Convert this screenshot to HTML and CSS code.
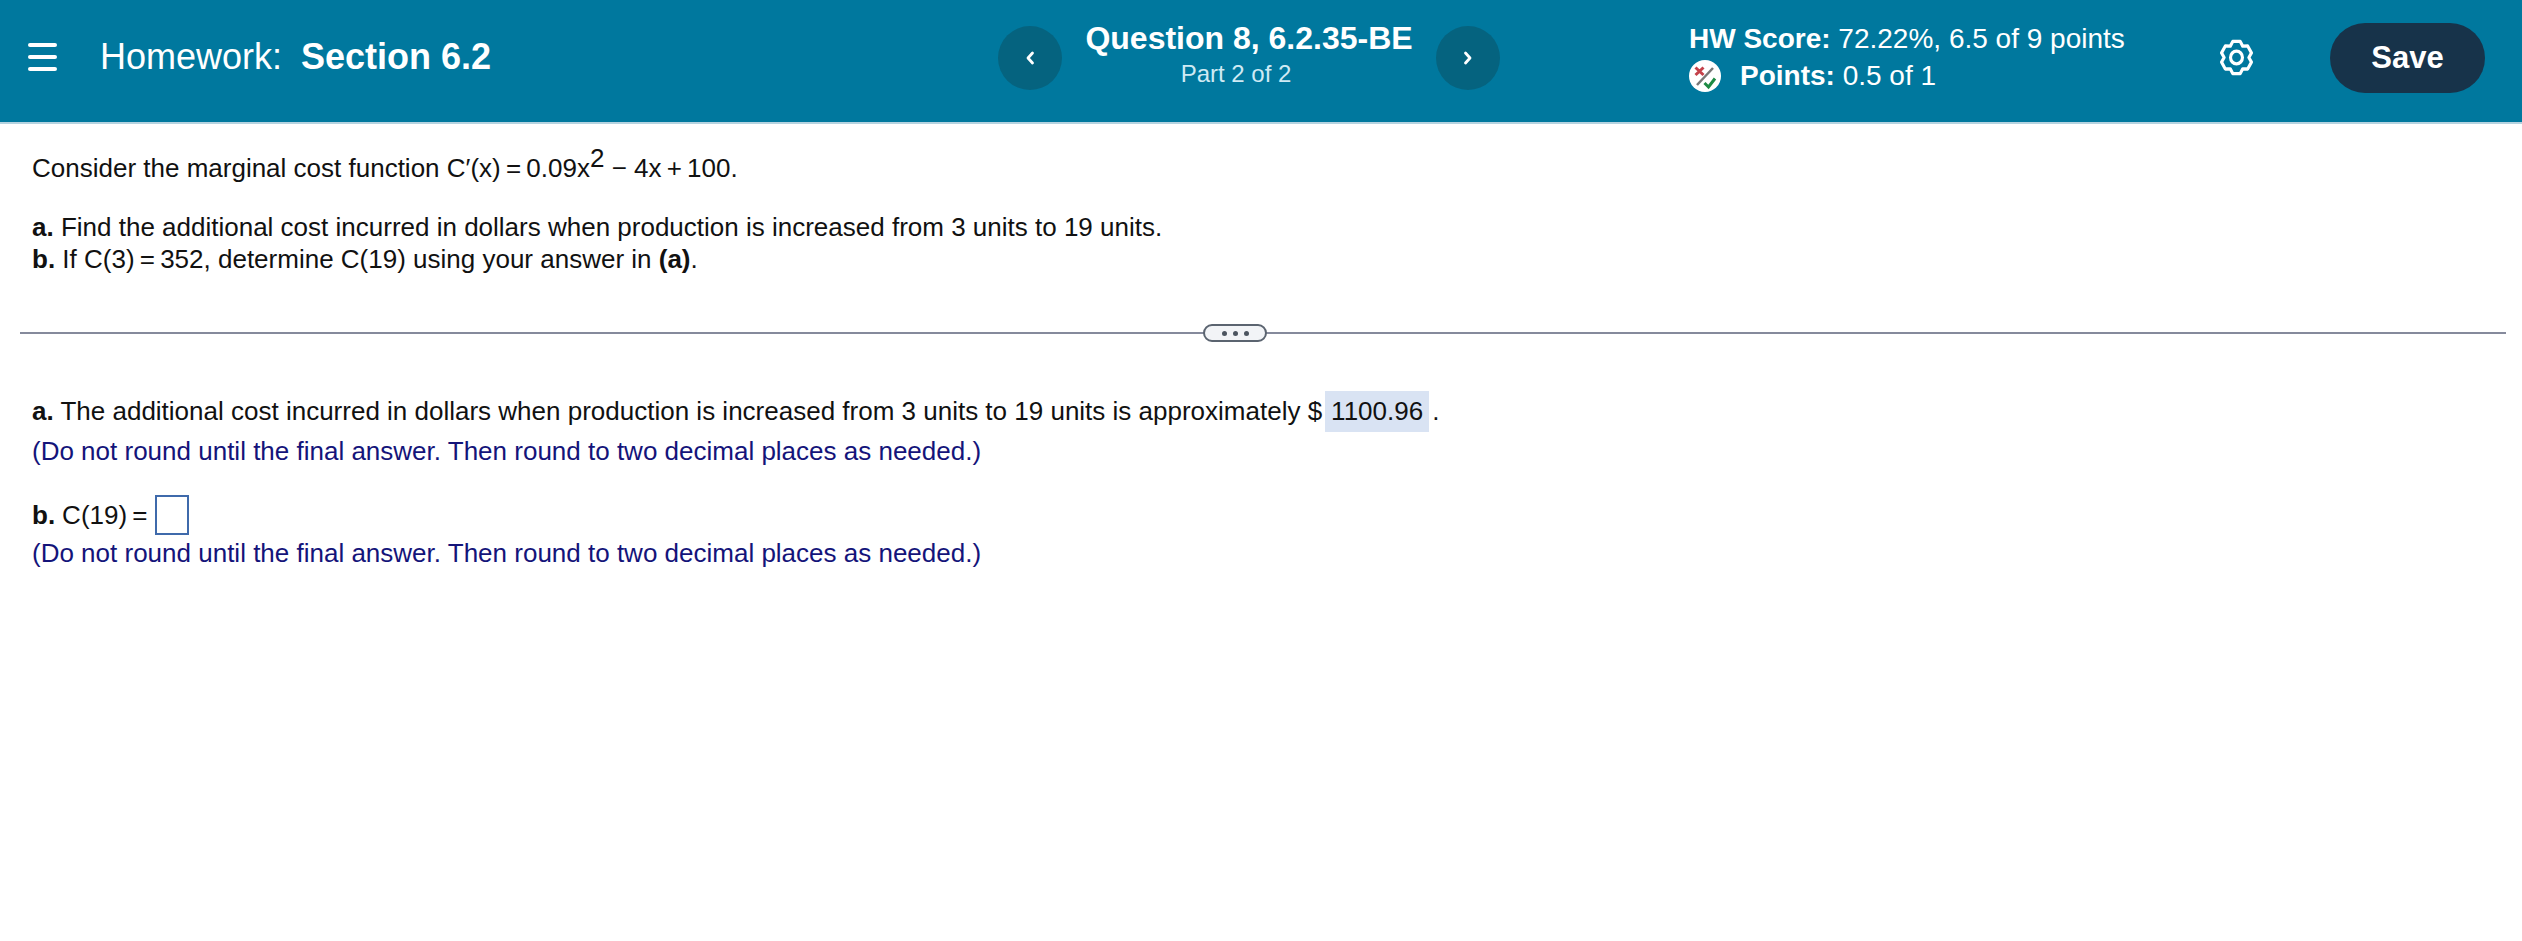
FILE: index.html
```html
<!DOCTYPE html>
<html lang="en">
<head>
    <meta charset="UTF-8">
    <title>Homework: Section 6.2</title>
    <link rel="stylesheet" href="styles.css">
</head>
<body>
    <header class="topbar">
        <div class="topbar-left">
            <div class="menu-icon"><span></span><span></span><span></span></div>
            <div class="hw-title">Homework:<b>Section 6.2</b></div>
        </div>

        <div class="question-nav">
            <button class="nav-btn"><svg width="12" height="18" viewBox="0 0 12 18"><path d="M8.500 4 L4 9 L8.500 14" fill="none" stroke="#fff" stroke-width="2.800" stroke-linecap="round" stroke-linejoin="round"/></svg></button>
            <div class="question-info">
                <div class="question-name">Question 8, 6.2.35-BE</div>
                <div class="question-part">Part 2 of 2</div>
            </div>
            <button class="nav-btn"><svg width="12" height="18" viewBox="0 0 12 18"><path d="M3.500 4 L8 9 L3.500 14" fill="none" stroke="#fff" stroke-width="2.800" stroke-linecap="round" stroke-linejoin="round"/></svg></button>
        </div>

        <div class="score">
            <div class="score-line"><b>HW Score:</b> 72.22%, 6.5 of 9 points</div>
            <div class="score-line points-line">
                <svg class="points-icon" width="32" height="32" viewBox="0 0 32 32">
                    <circle cx="16" cy="16" r="16" fill="#fff"/>
                    <path d="M8 25 L24 8" stroke="#777" stroke-width="2.500"/>
                    <path d="M6.500 7.500 L14.500 15 M14.500 7.500 L6.500 15" stroke="#c4414a" stroke-width="3"/>
                    <path d="M15.500 23 L19.500 27 L26 18.500" fill="none" stroke="#1d8a44" stroke-width="3"/>
                </svg>
                <span><b>Points:</b> 0.5 of 1</span>
            </div>
        </div>

        <svg class="gear" width="33" height="37" viewBox="0 0 36 38" preserveAspectRatio="none">
            <path d="M22.100 2.500 L24.750 7.300 L30.200 7.200 L34.300 14.300 L31.500 19 L34.300 23.700 L30.200 30.800 L24.750 30.700 L22.100 35.500 L13.900 35.500 L11.250 30.700 L5.800 30.800 L1.700 23.700 L4.500 19 L1.700 14.300 L5.800 7.200 L11.250 7.300 L13.900 2.500 Z" fill="none" stroke="#fff" stroke-width="3.400" stroke-linejoin="round"/>
            <circle cx="18" cy="19" r="6.500" fill="none" stroke="#fff" stroke-width="3.400"/>
        </svg>

        <button class="save-btn">Save</button>
    </header>

    <main>
        <section class="question">
            <p class="intro">Consider the marginal cost function C&prime;(x)&thinsp;=&thinsp;0.09x<sup>2</sup> &minus; 4x&thinsp;+&thinsp;100.</p>
            <p><b>a.</b> Find the additional cost incurred in dollars when production is increased from 3 units to 19 units.</p>
            <p><b>b.</b> If C(3)&thinsp;=&thinsp;352, determine C(19) using your answer in <b>(a)</b>.</p>
        </section>

        <div class="divider"><span class="divider-pill"><i></i><i></i><i></i></span></div>

        <section class="answers">
            <p><b>a.</b> The additional cost incurred in dollars when production is increased from 3 units to 19 units is approximately $<span class="filled">1100.96</span>.</p>
            <p class="hint">(Do not round until the final answer. Then round to two decimal places as needed.)</p>
            <p class="answer-b"><b>b.</b> C(19)&thinsp;=<span class="answer-box"></span></p>
            <p class="hint">(Do not round until the final answer. Then round to two decimal places as needed.)</p>
        </section>
    </main>
</body>
</html>
```

FILE: styles.css
```css
* {
    box-sizing: border-box;
}

body {
    margin: 0;
    font-family: "Liberation Sans", Arial, sans-serif;
    font-size: 26px;
    color: #111;
    background: #fff;
}

.topbar {
    display: flex;
    align-items: center;
    height: 124px;
    padding-bottom: 6px;
    background: #00789e;
    border-bottom: 2px solid #b5d3e0;
    color: #fff;
}

.topbar-left {
    display: flex;
    align-items: center;
    width: 998px;
}

.menu-icon {
    display: flex;
    flex-direction: column;
    gap: 8px;
    width: 29px;
    margin-left: 28px;
    margin-top: -2px;
}

.menu-icon span {
    height: 4px;
    border-radius: 2px;
    background: #fff;
}

.hw-title {
    margin-left: 43px;
    margin-top: -2px;
    font-size: 36px;
}

.hw-title b {
    margin-left: 19px;
}

.question-nav {
    display: flex;
    align-items: center;
    width: 502px;
}

.nav-btn {
    display: flex;
    align-items: center;
    justify-content: center;
    width: 64px;
    height: 64px;
    flex-shrink: 0;
    padding: 0;
    border: none;
    border-radius: 50%;
    background: #05637f;
}

.question-info {
    flex: 1;
    text-align: center;
    margin-top: -7px;
}

.question-name {
    font-size: 32px;
    font-weight: bold;
    line-height: 38px;
}

.question-part {
    padding-right: 26px;
    font-size: 24px;
    line-height: 34px;
    color: #cfeaf4;
}

.score {
    margin-left: 189px;
    width: 531px;
    margin-top: -2px;
    font-size: 28px;
}

.score-line {
    line-height: 37px;
}

.points-line {
    display: flex;
    align-items: center;
    gap: 19px;
}

.gear {
    flex-shrink: 0;
    margin-top: -2px;
}

.save-btn {
    width: 155px;
    height: 70px;
    margin-left: 77px;
    flex-shrink: 0;
    border: none;
    border-radius: 35px;
    background: #17334a;
    color: #fff;
    font-family: inherit;
    font-size: 31px;
    font-weight: bold;
}

main {
    padding: 0 16px 0 20px;
}

.question p,
.answers p {
    margin: 0;
    padding-left: 12px;
}

.question {
    padding-top: 28px;
    line-height: 32px;
}

.question .intro {
    margin-bottom: 27px;
}

sup {
    font-size: 26px;
    line-height: 0;
    vertical-align: 10px;
}

.divider {
    position: relative;
    height: 2px;
    margin-top: 57px;
    background: #858a9c;
}

.divider-pill {
    position: absolute;
    left: 1183px;
    top: -8px;
    display: flex;
    align-items: center;
    justify-content: center;
    gap: 6px;
    width: 64px;
    height: 18px;
    border: 2px solid #5b6470;
    border-radius: 9px;
    background: #f2f4f7;
}

.divider-pill i {
    width: 5px;
    height: 5px;
    border-radius: 50%;
    background: #4c5560;
}

.answers {
    padding-top: 57px;
}

.answers p {
    line-height: 38px;
}

.filled {
    display: inline-block;
    margin: 0 3px;
    padding: 0 6px;
    line-height: 41px;
    background: #d9e3f3;
}

.answers .hint {
    color: #14147a;
}

.answers .answer-b {
    display: flex;
    align-items: center;
    gap: 7px;
    margin-top: 25px;
    height: 40px;
}

.answer-b + .hint {
    margin-top: -1px;
}

.answer-box {
    display: inline-block;
    width: 34px;
    height: 40px;
    border: 2px solid #3f6aab;
    background: #fff;
}
```
